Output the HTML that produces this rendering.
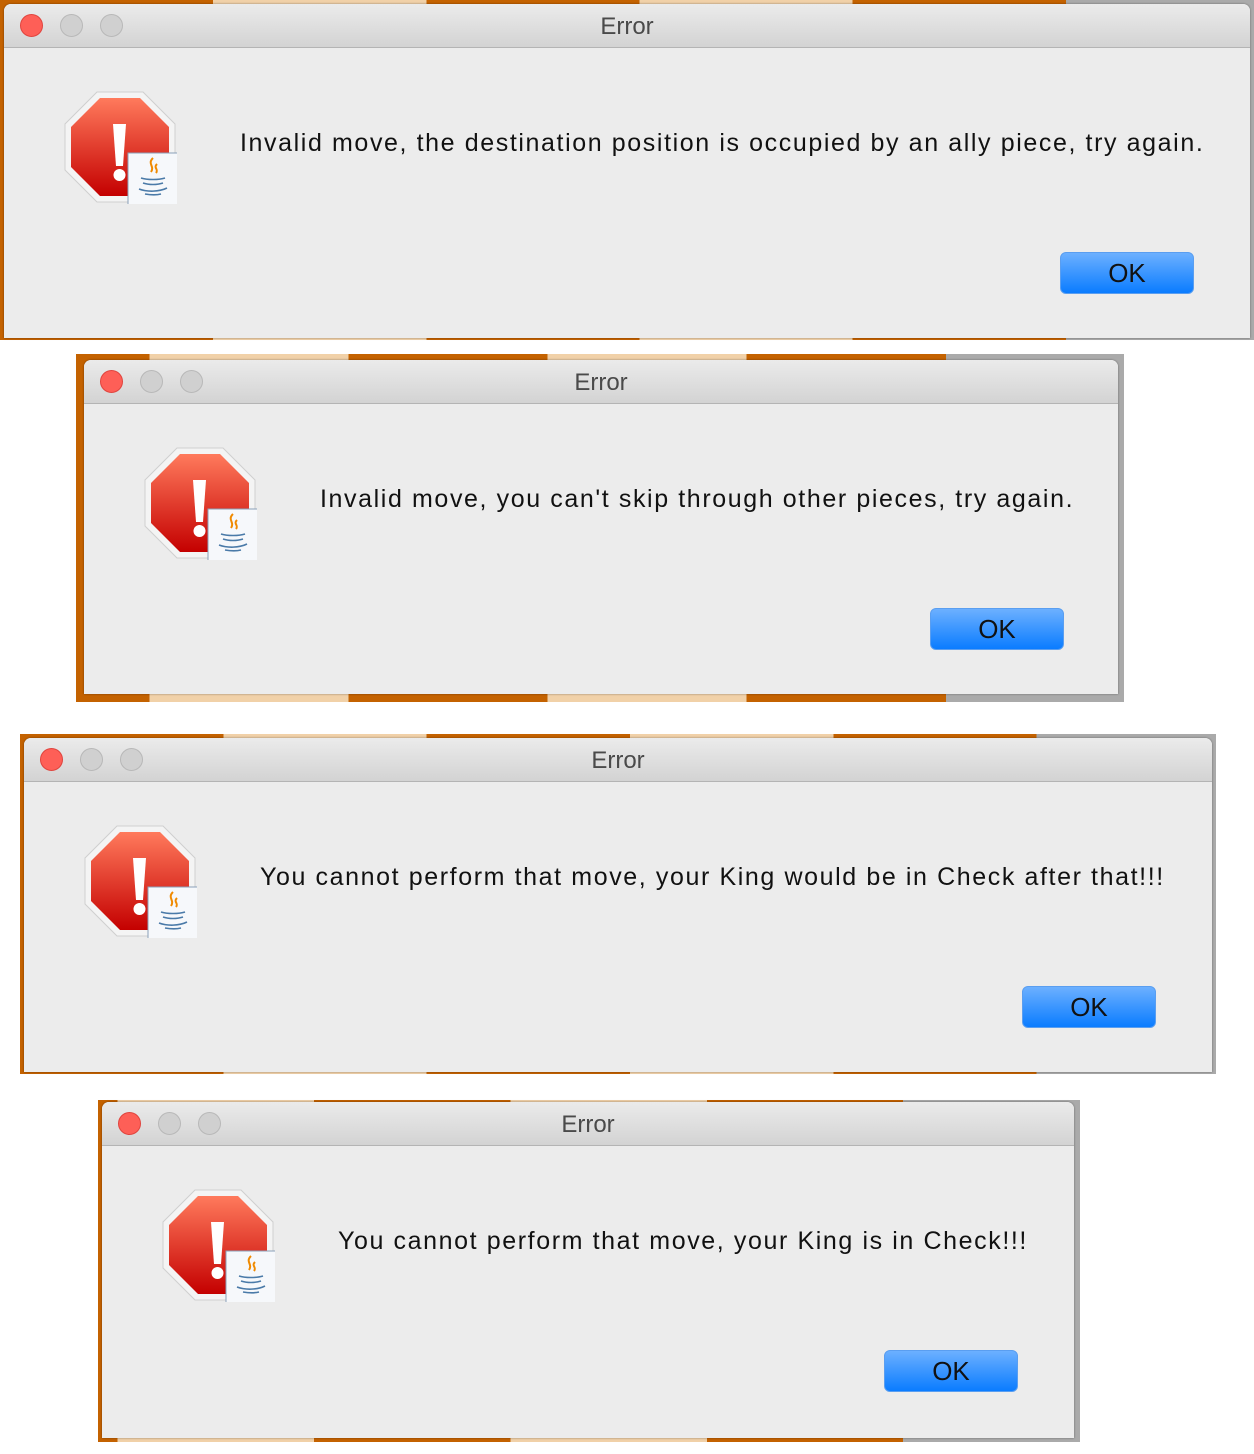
<!DOCTYPE html>
<html><head><style>
html,body{margin:0;padding:0;background:#fff;width:1254px;height:1454px;position:relative;overflow:hidden}
.outer{position:absolute;background:linear-gradient(90deg,#c46200 0 17%,#f1d1a8 17% 34%,#c46200 34% 51%,#f1d1a8 51% 68%,#c46200 68% 85%,#aaa 85% 100%)}
.win{position:absolute;background:#ececec;border-radius:7px 7px 0 0;overflow:hidden;box-shadow:0 0 2px rgba(0,0,0,.4)}
.tb{position:absolute;left:0;right:0;top:0;height:43px;background:linear-gradient(#ebebeb,#d3d3d3);border-bottom:1px solid #b4b4b4;text-align:center;font:24px/46px "Liberation Sans",sans-serif;color:#4a4a4a}
.dot{position:absolute;top:10px;width:23px;height:23px;border-radius:50%;background:#d0d0d0;border:1px solid #b8b8b8;box-sizing:border-box}
.dot.r{background:#fe5f57;border-color:#e0443e}
.ico{position:absolute;left:57px;top:84px;width:116px;height:116px}
.msg{position:absolute;top:122px;font:25px/34px "Liberation Sans",sans-serif;color:#111;letter-spacing:1.6px;white-space:nowrap}
.ok{position:absolute;top:248px;width:132px;height:40px;border:1px solid #5a9ef0;border-radius:6px;background:linear-gradient(#6cb0ff,#0a7cff);font:26px/40px "Liberation Sans",sans-serif;text-align:center;color:#111}
</style></head><body>

<svg width="0" height="0" style="position:absolute">
<defs>
<linearGradient id="rg" x1="0" y1="0" x2="0" y2="1"><stop offset="0" stop-color="#ff7a5c"/><stop offset="1" stop-color="#c40000"/></linearGradient>
<symbol id="icon" viewBox="0 0 116 116">
<polygon points="36,4 82,4 114,36 114,82 82,114 36,114 4,82 4,36" fill="#f4f4f4" stroke="#cfcfcf"/>
<polygon points="39,10 79,10 108,39 108,79 79,108 39,108 10,79 10,39" fill="url(#rg)"/>
<path d="M52,36 h13 l-3,42 h-7z" fill="#fff"/>
<circle cx="58.5" cy="87" r="6" fill="#fff"/>
<rect x="67" y="65" width="50" height="52" fill="#f6f8fb" stroke="#8aa0b8"/>
<path d="M92,70 c-6,6 2,8 -2,14 M96,76 c-4,4 2,5 -1,9" stroke="#f08a00" stroke-width="2" fill="none"/>
<path d="M80,90 c6,2 18,2 24,0 M82,95 c6,2 14,2 20,0 M78,101 c8,3 20,3 28,-1 M84,106 c6,1 12,1 16,0" stroke="#4a7aa8" stroke-width="1.6" fill="none"/>
</symbol>
</defs></svg>

<div class="outer" style="left:0;top:0;width:1254px;height:340px"></div>
<div class="win" style="left:4px;top:4px;width:1246px;height:334px">
<div class="tb">Error<div class="dot r" style="left:16px"></div><div class="dot" style="left:56px"></div><div class="dot" style="left:96px"></div></div>
<svg class="ico"><use href="#icon"/></svg>
<div class="msg" style="left:236px">Invalid move, the destination position is occupied by an ally piece, try again.</div>
<div class="ok" style="left:1056px">OK</div>
</div>

<div class="outer" style="left:76px;top:354px;width:1048px;height:348px;background:linear-gradient(90deg,#c46200 0 7%,#f1d1a8 7% 26%,#c46200 26% 45%,#f1d1a8 45% 64%,#c46200 64% 83%,#aaa 83% 100%)"></div>
<div class="win" style="left:84px;top:360px;width:1034px;height:334px">
<div class="tb">Error<div class="dot r" style="left:16px"></div><div class="dot" style="left:56px"></div><div class="dot" style="left:96px"></div></div>
<svg class="ico"><use href="#icon"/></svg>
<div class="msg" style="left:236px">Invalid move, you can't skip through other pieces, try again.</div>
<div class="ok" style="left:846px">OK</div>
</div>

<div class="outer" style="left:20px;top:734px;width:1196px;height:340px"></div>
<div class="win" style="left:24px;top:738px;width:1188px;height:334px">
<div class="tb">Error<div class="dot r" style="left:16px"></div><div class="dot" style="left:56px"></div><div class="dot" style="left:96px"></div></div>
<svg class="ico"><use href="#icon"/></svg>
<div class="msg" style="left:236px">You cannot perform that move, your King would be in Check after that!!!</div>
<div class="ok" style="left:998px">OK</div>
</div>

<div class="outer" style="left:98px;top:1100px;width:982px;height:342px;background:linear-gradient(90deg,#c46200 0 2%,#f1d1a8 2% 22%,#c46200 22% 42%,#f1d1a8 42% 62%,#c46200 62% 82%,#aaa 82% 100%)"></div>
<div class="win" style="left:102px;top:1102px;width:972px;height:336px">
<div class="tb">Error<div class="dot r" style="left:16px"></div><div class="dot" style="left:56px"></div><div class="dot" style="left:96px"></div></div>
<svg class="ico"><use href="#icon"/></svg>
<div class="msg" style="left:236px">You cannot perform that move, your King is in Check!!!</div>
<div class="ok" style="left:782px">OK</div>
</div>

</body></html>
